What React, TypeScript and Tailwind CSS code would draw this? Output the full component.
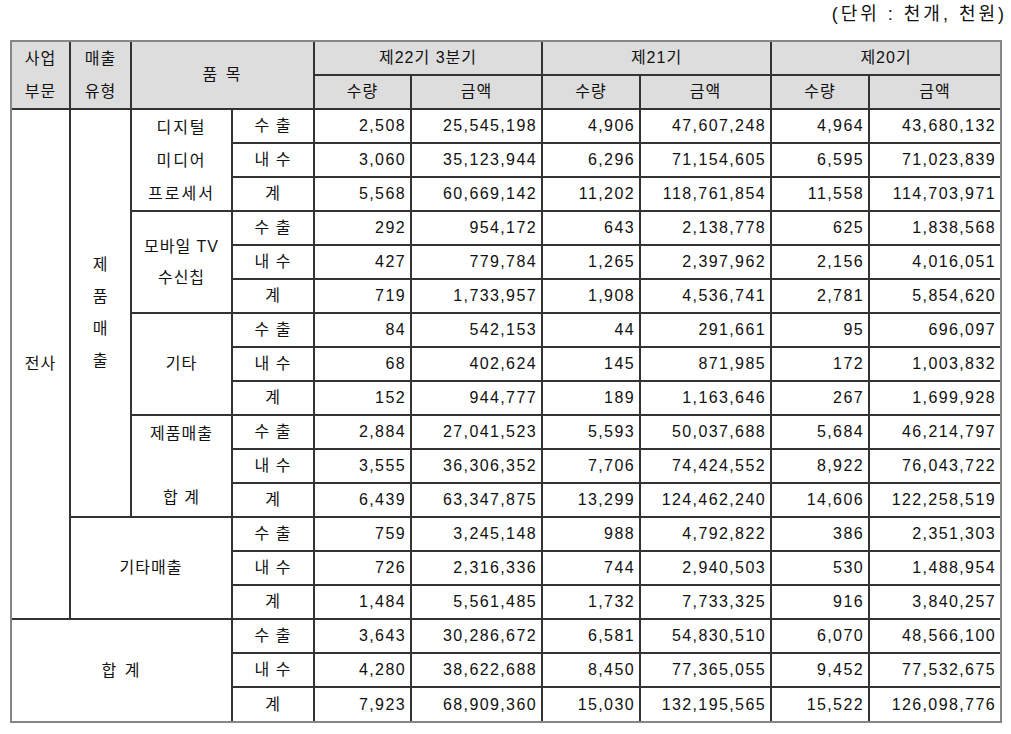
import React from "react";

type Row = [string, string, string, string, string, string, string];

const groups: { rows: Row[] }[] = [
  {
    rows: [
      ["수 출", "2,508", "25,545,198", "4,906", "47,607,248", "4,964", "43,680,132"],
      ["내 수", "3,060", "35,123,944", "6,296", "71,154,605", "6,595", "71,023,839"],
      ["계", "5,568", "60,669,142", "11,202", "118,761,854", "11,558", "114,703,971"],
    ],
  },
  {
    rows: [
      ["수 출", "292", "954,172", "643", "2,138,778", "625", "1,838,568"],
      ["내 수", "427", "779,784", "1,265", "2,397,962", "2,156", "4,016,051"],
      ["계", "719", "1,733,957", "1,908", "4,536,741", "2,781", "5,854,620"],
    ],
  },
  {
    rows: [
      ["수 출", "84", "542,153", "44", "291,661", "95", "696,097"],
      ["내 수", "68", "402,624", "145", "871,985", "172", "1,003,832"],
      ["계", "152", "944,777", "189", "1,163,646", "267", "1,699,928"],
    ],
  },
  {
    rows: [
      ["수 출", "2,884", "27,041,523", "5,593", "50,037,688", "5,684", "46,214,797"],
      ["내 수", "3,555", "36,306,352", "7,706", "74,424,552", "8,922", "76,043,722"],
      ["계", "6,439", "63,347,875", "13,299", "124,462,240", "14,606", "122,258,519"],
    ],
  },
  {
    rows: [
      ["수 출", "759", "3,245,148", "988", "4,792,822", "386", "2,351,303"],
      ["내 수", "726", "2,316,336", "744", "2,940,503", "530", "1,488,954"],
      ["계", "1,484", "5,561,485", "1,732", "7,733,325", "916", "3,840,257"],
    ],
  },
  {
    rows: [
      ["수 출", "3,643", "30,286,672", "6,581", "54,830,510", "6,070", "48,566,100"],
      ["내 수", "4,280", "38,622,688", "8,450", "77,365,055", "9,452", "77,532,675"],
      ["계", "7,923", "68,909,360", "15,030", "132,195,565", "15,522", "126,098,776"],
    ],
  },
];

const td = "border-2 border-[#333333] p-0";
const kr = "text-center align-middle tracking-[1px]";
const num = "text-right align-middle pr-[4px] tracking-[1.4px]";

function NumCells({ r }: { r: Row }) {
  return (
    <>
      <td className={`${td} ${kr}`}>{r[0]}</td>
      {r.slice(1).map((v, i) => (
        <td key={i} className={`${td} ${num}`}>
          {v}
        </td>
      ))}
    </>
  );
}

function Lines({ lines, lh }: { lines: string[]; lh: string }) {
  return (
    <div className={`flex flex-col items-center ${lh}`}>
      {lines.map((l, i) => (
        <div key={i}>{l === "" ? "\u00a0" : l}</div>
      ))}
    </div>
  );
}

export default function App() {
  const thead = "border-2 border-[#333333] p-0 bg-[#dddddd] text-center align-middle tracking-[1px]";
  return (
    <div
      className="w-[1011px] h-[734px] bg-white text-[#111111] text-[16px]"
      style={{ fontFamily: '"Liberation Sans", "Noto Sans CJK KR", sans-serif' }}
    >
      <div className="h-[40px] flex justify-end pr-[4px] pt-[3px] text-[18px] leading-[22px] tracking-[3px]">
        (단위 : 천개, 천원)
      </div>
      <div className="ml-[10px] w-[992px] border-2 border-[#868686]">
        <table className="border-collapse border-hidden table-fixed w-[988px]">
          <colgroup>
            <col className="w-[58px]" />
            <col className="w-[61px]" />
            <col className="w-[101px]" />
            <col className="w-[82px]" />
            <col className="w-[97px]" />
            <col className="w-[131px]" />
            <col className="w-[98px]" />
            <col className="w-[131px]" />
            <col className="w-[98px]" />
            <col className="w-[131px]" />
          </colgroup>
          <thead>
            <tr className="h-[33px]">
              <th rowSpan={2} className={`${thead} font-normal`}>
                <Lines lines={["사업", "부문"]} lh="leading-[33px]" />
              </th>
              <th rowSpan={2} className={`${thead} font-normal`}>
                <Lines lines={["매출", "유형"]} lh="leading-[33px]" />
              </th>
              <th rowSpan={2} colSpan={2} className={`${thead} font-normal tracking-[2px]`}>
                품 목
              </th>
              <th colSpan={2} className={`${thead} font-normal`}>
                제22기 3분기
              </th>
              <th colSpan={2} className={`${thead} font-normal`}>
                제21기
              </th>
              <th colSpan={2} className={`${thead} font-normal`}>
                제20기
              </th>
            </tr>
            <tr className="h-[34px]">
              {["수량", "금액", "수량", "금액", "수량", "금액"].map((h, i) => (
                <th key={i} className={`${thead} font-normal`}>
                  {h}
                </th>
              ))}
            </tr>
          </thead>
          <tbody>
            {groups.map((g, gi) =>
              g.rows.map((r, ri) => (
                <tr key={`${gi}-${ri}`} className="h-[34px]">
                  {gi === 0 && ri === 0 && (
                    <>
                      <td rowSpan={15} className={`${td} ${kr}`}>
                        전사
                      </td>
                      <td rowSpan={12} className={`${td} ${kr}`}>
                        <Lines lines={["제", "품", "매", "출"]} lh="leading-[32px]" />
                      </td>
                    </>
                  )}
                  {ri === 0 && gi === 0 && (
                    <td rowSpan={3} className={`${td} ${kr} tracking-[2px]`}>
                      <Lines lines={["디지털", "미디어", "프로세서"]} lh="leading-[33px]" />
                    </td>
                  )}
                  {ri === 0 && gi === 1 && (
                    <td rowSpan={3} className={`${td} ${kr}`}>
                      <Lines lines={["모바일 TV", "수신칩"]} lh="leading-[31px]" />
                    </td>
                  )}
                  {ri === 0 && gi === 2 && (
                    <td rowSpan={3} className={`${td} ${kr}`}>
                      기타
                    </td>
                  )}
                  {ri === 0 && gi === 3 && (
                    <td rowSpan={3} className={`${td} ${kr}`}>
                      <Lines lines={["제품매출", "", "합 계"]} lh="leading-[32px]" />
                    </td>
                  )}
                  {ri === 0 && gi === 4 && (
                    <td rowSpan={3} colSpan={2} className={`${td} ${kr}`}>
                      기타매출
                    </td>
                  )}
                  {ri === 0 && gi === 5 && (
                    <td rowSpan={3} colSpan={3} className={`${td} ${kr} tracking-[2px]`}>
                      합 계
                    </td>
                  )}
                  <NumCells r={r} />
                </tr>
              ))
            )}
          </tbody>
        </table>
      </div>
    </div>
  );
}
